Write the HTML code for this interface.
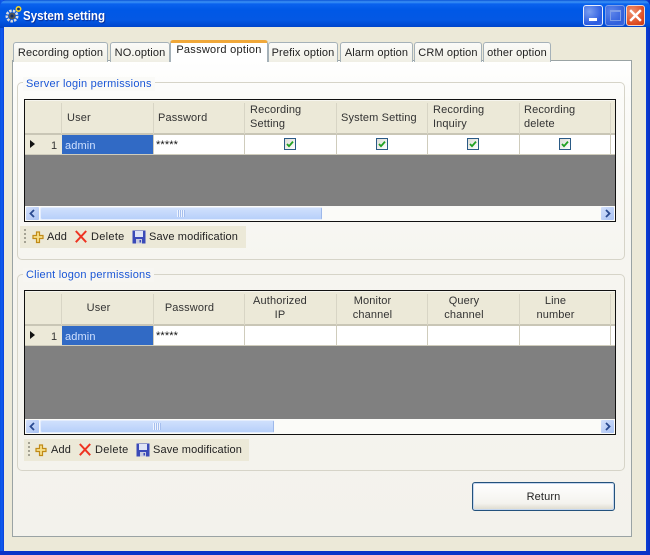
<!DOCTYPE html>
<html>
<head>
<meta charset="utf-8">
<style>
html,body{margin:0;padding:0;width:650px;height:555px;overflow:hidden;background:#0a3cd0}
*{box-sizing:border-box}
body{font-family:"Liberation Sans",sans-serif;font-size:11px;color:#222;position:relative;letter-spacing:.13px}
.a,.a *{position:absolute}
.t{white-space:nowrap;line-height:13px}
#win{left:0;top:0;width:650px;height:555px;background:linear-gradient(90deg,#0a50e0 0,#0f5cf0 2px,#0a3fd8 4px,#0a3fd8 646px,#0a2fc0 650px);overflow:hidden}
#title{left:0;top:0;width:650px;height:28px;border-radius:7px 7px 0 0;background:linear-gradient(180deg,#0a55d8 0,#3c93f5 2px,#0a62ee 4px,#0058e6 10px,#0458e4 20px,#0048d0 26px,#0040c0 28px)}
#client{left:4px;top:27px;width:642px;height:524px;background:#ece9d8}
#bottom{left:0;top:551px;width:650px;height:4px;background:#0a33c8}
.tab{height:20px;background:linear-gradient(180deg,#fbfbf8,#f0efe6);border:1px solid #a5b1b8;border-bottom:0;border-radius:3px 3px 0 0;text-align:center;line-height:20px;font-size:11px;color:#222;white-space:nowrap}
#page{left:12px;top:60px;width:620px;height:477px;background:linear-gradient(180deg,#ffffff 0,#fbfbf8 40px,#f6f5f0 200px,#f3f2ec 477px);border:1px solid #9aa3a4}
.grp{border:1px solid #d6d4c8;border-radius:5px}
.leg{color:#1a56d6;font-size:11px;line-height:13px;white-space:nowrap;padding:0 3px;background:#fafaf7;letter-spacing:.22px}
.grid{left:24px;width:592px;background:#fff;border:1px solid #111}
.hd{background:#ece9d8;font-size:11px;line-height:13.5px;color:#333}
.vsep{width:1px;background:#d8d5c5}
.rsep{width:1px;background:#cfccbc}
.bar{height:22px;background:#ece9d8}
.sb-btn{width:13px;height:13px;background:linear-gradient(135deg,#d3e0fb,#a9c2f3);border-radius:1px}
.thumb{height:13px;background:linear-gradient(180deg,#cfe0fc,#b8d0fa);border:1px solid #e4edfd;border-right-color:#9db8ea;border-radius:2px}
.cb{width:12px;height:12px;border:1px solid #2a5a85;background:linear-gradient(135deg,#dcdcd6,#fff)}
</style>
</head>
<body>
<div id="win" class="a">
  <div id="title">
    <svg style="left:4px;top:5px" width="18" height="18" viewBox="0 0 18 18">
      <circle cx="8" cy="11" r="5.2" fill="none" stroke="#dcdcdc" stroke-width="2.6" stroke-dasharray="2.4 1.2"/>
      <circle cx="8" cy="11" r="3.4" fill="#555"/>
      <circle cx="8" cy="11" r="1.5" fill="#10306a"/>
      <circle cx="14.5" cy="4" r="2.2" fill="#10306a" stroke="#f4d32a" stroke-width="1.6"/>
    </svg>
    <div class="t" style="left:23px;top:8px;font-size:13px;font-weight:bold;color:#fff;text-shadow:1px 1px 1px #0a2a90;line-height:15px;letter-spacing:0;transform:scaleX(.887);transform-origin:0 0">System setting</div>
    <div style="left:583px;top:5px;width:20px;height:21px;border:1px solid #e8eefc;border-radius:3px;background:radial-gradient(circle at 30% 30%,#7b9ff0,#2b5be0 70%,#3a6ae8)"></div>
    <div style="left:589px;top:18px;width:8px;height:3px;background:#fff"></div>
    <div style="left:605px;top:5px;width:20px;height:21px;border:1px solid #7e9ee8;border-radius:3px;background:radial-gradient(circle at 30% 30%,#5f86ea,#2f5fdc 70%,#3a68e0)"></div>
    <div style="left:610px;top:10px;width:11px;height:11px;border:1px solid #7e9ee8;border-top-width:2px"></div>
    <div style="left:626px;top:5px;width:19px;height:21px;border:1px solid #f0d8d0;border-radius:3px;background:radial-gradient(circle at 30% 30%,#ef9270,#dd4a20 70%,#c83a18)"></div>
    <svg style="left:629px;top:9px" width="13" height="13" viewBox="0 0 13 13"><path d="M2 2L11 11M11 2L2 11" stroke="#fff" stroke-width="2.4" stroke-linecap="square"/></svg>
  </div>
  <div id="client"></div>
  <div id="bottom"></div>

  <div id="page"></div>

  <div class="tab" style="left:13px;top:42px;width:95px">Recording option</div>
  <div class="tab" style="left:110px;top:42px;width:60px">NO.option</div>
  <div class="tab" style="left:268px;top:42px;width:70px">Prefix option</div>
  <div class="tab" style="left:340px;top:42px;width:73px">Alarm option</div>
  <div class="tab" style="left:414px;top:42px;width:68px">CRM option</div>
  <div class="tab" style="left:483px;top:42px;width:68px">other option</div>
  <div class="tab" style="left:170px;top:40px;width:98px;height:22px;background:#fff;border:0;border-left:1px solid #a5b1b8;border-right:1px solid #a5b1b8;border-top:3px solid #f0a83a;line-height:15px;letter-spacing:.27px;z-index:3">Password option</div>

  <!-- group 1 -->
  <div class="grp" style="left:17px;top:82px;width:608px;height:178px"></div>
  <div class="leg" style="left:23px;top:77px;padding-top:1px">Server login permissions</div>
  <div class="grid" style="top:99px;height:123px">
    <div class="hd" style="left:0;top:0;width:590px;height:35px;border-bottom:2px solid #c9c6b6;border-top:1px solid #f6f5ee"></div>
    <div class="vsep" style="left:36px;top:3px;height:31px"></div>
    <div class="vsep" style="left:128px;top:3px;height:31px"></div>
    <div class="vsep" style="left:219px;top:3px;height:31px"></div>
    <div class="vsep" style="left:311px;top:3px;height:31px"></div>
    <div class="vsep" style="left:402px;top:3px;height:31px"></div>
    <div class="vsep" style="left:494px;top:3px;height:31px"></div>
    <div class="vsep" style="left:585px;top:3px;height:31px"></div>
    <div class="t" style="left:42px;top:12px;color:#333">User</div>
    <div class="t" style="left:133px;top:12px;color:#333">Password</div>
    <div class="t" style="left:225px;top:4px;color:#333;line-height:13.5px">Recording<br>Setting</div>
    <div class="t" style="left:316px;top:12px;color:#333">System Setting</div>
    <div class="t" style="left:408px;top:4px;color:#333;line-height:13.5px">Recording<br>Inquiry</div>
    <div class="t" style="left:499px;top:4px;color:#333;line-height:13.5px">Recording<br>delete</div>

    <div style="left:0;top:35px;width:37px;height:20px;background:#ece9d8"></div>
    <div style="left:5px;top:40px;width:0;height:0;border-left:5px solid #111;border-top:4.5px solid transparent;border-bottom:4.5px solid transparent"></div>
    <div class="t" style="left:26px;top:40px;color:#333">1</div>
    <div style="left:37px;top:35px;width:91px;height:20px;background:#316ac5"></div>
    <div class="t" style="left:40px;top:40px;color:#cfe0ff">admin</div>
    <div class="t" style="left:131px;top:39px;color:#111">*****</div>
    <div class="rsep" style="left:128px;top:35px;height:20px"></div>
    <div class="rsep" style="left:219px;top:35px;height:20px"></div>
    <div class="rsep" style="left:311px;top:35px;height:20px"></div>
    <div class="rsep" style="left:402px;top:35px;height:20px"></div>
    <div class="rsep" style="left:494px;top:35px;height:20px"></div>
    <div class="rsep" style="left:585px;top:35px;height:20px"></div>
    <div style="left:0;top:54px;width:590px;height:1px;background:#cfccbc"></div>

    <div class="cb" style="left:259px;top:38px"></div><svg style="left:259px;top:38px" width="12" height="12" viewBox="0 0 12 12"><path d="M3 6L5 8.2L9 3.6" fill="none" stroke="#21a121" stroke-width="1.8"/></svg>
    <div class="cb" style="left:351px;top:38px"></div><svg style="left:351px;top:38px" width="12" height="12" viewBox="0 0 12 12"><path d="M3 6L5 8.2L9 3.6" fill="none" stroke="#21a121" stroke-width="1.8"/></svg>
    <div class="cb" style="left:442px;top:38px"></div><svg style="left:442px;top:38px" width="12" height="12" viewBox="0 0 12 12"><path d="M3 6L5 8.2L9 3.6" fill="none" stroke="#21a121" stroke-width="1.8"/></svg>
    <div class="cb" style="left:534px;top:38px"></div><svg style="left:534px;top:38px" width="12" height="12" viewBox="0 0 12 12"><path d="M3 6L5 8.2L9 3.6" fill="none" stroke="#21a121" stroke-width="1.8"/></svg>

    <div style="left:0;top:55px;width:590px;height:51px;background:#808080"></div>
    <div style="left:0;top:106px;width:590px;height:15px;background:#fbfbf8"></div>
    <div class="sb-btn" style="left:1px;top:107px"></div>
    <svg style="left:1px;top:107px" width="13" height="13" viewBox="0 0 13 13"><path d="M8 3L4.5 6.5L8 10" fill="none" stroke="#2a4a90" stroke-width="1.8"/></svg>
    <div class="thumb" style="left:15px;top:107px;width:282px"></div>
    <div style="left:152px;top:110px;width:8px;height:7px;background:repeating-linear-gradient(90deg,#eef4ff 0,#eef4ff 1px,#a6bfee 1px,#a6bfee 2px)"></div>
    <div class="sb-btn" style="left:576px;top:107px"></div>
    <svg style="left:576px;top:107px" width="13" height="13" viewBox="0 0 13 13"><path d="M5 3L8.5 6.5L5 10" fill="none" stroke="#2a4a90" stroke-width="1.8"/></svg>
  </div>
  <div class="bar" style="left:20px;top:226px;width:226px"></div>
  <div style="left:24px;top:229px;width:2px;height:16px;background:repeating-linear-gradient(180deg,#a5a394 0,#a5a394 2px,transparent 2px,transparent 4px)"></div>
  <svg style="left:32px;top:231px" width="12" height="13" viewBox="0 0 12 13"><path d="M4.5 1H7.5V4.5H11V7.5H7.5V11.5H4.5V7.5H1V4.5H4.5Z" fill="#f8e08a" stroke="#c08a18" stroke-width="1.2"/></svg>
  <div class="t" style="left:47px;top:231px">Add</div>
  <svg style="left:75px;top:230px" width="12" height="13" viewBox="0 0 12 13"><path d="M.8 1L11.2 12.2M11.2 1L.8 12.2" stroke="#ee3322" stroke-width="2"/></svg>
  <div class="t" style="left:91px;top:231px;letter-spacing:.3px">Delete</div>
  <svg style="left:132px;top:230px" width="14" height="14" viewBox="0 0 14 14"><rect x="0.5" y="0.5" width="13" height="13" fill="#3a4ab8"/><rect x="3" y="1" width="8" height="6" fill="#dfe4f6"/><rect x="4" y="9" width="6" height="4.5" fill="#c8cbe0"/><rect x="7.5" y="10" width="1.5" height="2.5" fill="#3a4ab8"/></svg>
  <div class="t" style="left:149px;top:231px">Save modification</div>

  <!-- group 2 -->
  <div class="grp" style="left:17px;top:274px;width:608px;height:197px"></div>
  <div class="leg" style="left:23px;top:268px;padding-top:1px;background:#f7f6f2">Client logon permissions</div>
  <div class="grid" style="top:290px;height:145px">
    <div class="hd" style="left:0;top:0;width:590px;height:35px;border-bottom:2px solid #c9c6b6;border-top:1px solid #f6f5ee"></div>
    <div class="vsep" style="left:36px;top:3px;height:31px"></div>
    <div class="vsep" style="left:128px;top:3px;height:31px"></div>
    <div class="vsep" style="left:219px;top:3px;height:31px"></div>
    <div class="vsep" style="left:311px;top:3px;height:31px"></div>
    <div class="vsep" style="left:402px;top:3px;height:31px"></div>
    <div class="vsep" style="left:494px;top:3px;height:31px"></div>
    <div class="vsep" style="left:585px;top:3px;height:31px"></div>
    <div class="t" style="left:28px;width:91px;text-align:center;top:11px;color:#333">User</div>
    <div class="t" style="left:119px;width:91px;text-align:center;top:11px;color:#333">Password</div>
    <div class="t" style="left:209px;width:92px;text-align:center;top:4px;color:#333;line-height:13.5px">Authorized<br>IP</div>
    <div class="t" style="left:302px;width:91px;text-align:center;top:4px;color:#333;line-height:13.5px">Monitor<br>channel</div>
    <div class="t" style="left:393px;width:92px;text-align:center;top:4px;color:#333;line-height:13.5px">Query<br>channel</div>
    <div class="t" style="left:485px;width:91px;text-align:center;top:4px;color:#333;line-height:13.5px">Line<br>number</div>

    <div style="left:0;top:35px;width:37px;height:20px;background:#ece9d8"></div>
    <div style="left:5px;top:40px;width:0;height:0;border-left:5px solid #111;border-top:4.5px solid transparent;border-bottom:4.5px solid transparent"></div>
    <div class="t" style="left:26px;top:40px;color:#333">1</div>
    <div style="left:37px;top:35px;width:91px;height:20px;background:#316ac5"></div>
    <div class="t" style="left:40px;top:40px;color:#cfe0ff">admin</div>
    <div class="t" style="left:131px;top:39px;color:#111">*****</div>
    <div class="rsep" style="left:128px;top:35px;height:20px"></div>
    <div class="rsep" style="left:219px;top:35px;height:20px"></div>
    <div class="rsep" style="left:311px;top:35px;height:20px"></div>
    <div class="rsep" style="left:402px;top:35px;height:20px"></div>
    <div class="rsep" style="left:494px;top:35px;height:20px"></div>
    <div class="rsep" style="left:585px;top:35px;height:20px"></div>
    <div style="left:0;top:54px;width:590px;height:1px;background:#cfccbc"></div>

    <div style="left:0;top:55px;width:590px;height:73px;background:#808080"></div>
    <div style="left:0;top:128px;width:590px;height:15px;background:#fbfbf8"></div>
    <div class="sb-btn" style="left:1px;top:129px"></div>
    <svg style="left:1px;top:129px" width="13" height="13" viewBox="0 0 13 13"><path d="M8 3L4.5 6.5L8 10" fill="none" stroke="#2a4a90" stroke-width="1.8"/></svg>
    <div class="thumb" style="left:15px;top:129px;width:234px"></div>
    <div style="left:128px;top:132px;width:8px;height:7px;background:repeating-linear-gradient(90deg,#eef4ff 0,#eef4ff 1px,#a6bfee 1px,#a6bfee 2px)"></div>
    <div class="sb-btn" style="left:576px;top:129px"></div>
    <svg style="left:576px;top:129px" width="13" height="13" viewBox="0 0 13 13"><path d="M5 3L8.5 6.5L5 10" fill="none" stroke="#2a4a90" stroke-width="1.8"/></svg>
  </div>
  <div class="bar" style="left:24px;top:439px;width:225px"></div>
  <div style="left:28px;top:442px;width:2px;height:16px;background:repeating-linear-gradient(180deg,#a5a394 0,#a5a394 2px,transparent 2px,transparent 4px)"></div>
  <svg style="left:35px;top:444px" width="12" height="13" viewBox="0 0 12 13"><path d="M4.5 1H7.5V4.5H11V7.5H7.5V11.5H4.5V7.5H1V4.5H4.5Z" fill="#f8e08a" stroke="#c08a18" stroke-width="1.2"/></svg>
  <div class="t" style="left:51px;top:444px">Add</div>
  <svg style="left:79px;top:443px" width="12" height="13" viewBox="0 0 12 13"><path d="M.8 1L11.2 12.2M11.2 1L.8 12.2" stroke="#ee3322" stroke-width="2"/></svg>
  <div class="t" style="left:95px;top:444px;letter-spacing:.3px">Delete</div>
  <svg style="left:136px;top:443px" width="14" height="14" viewBox="0 0 14 14"><rect x="0.5" y="0.5" width="13" height="13" fill="#3a4ab8"/><rect x="3" y="1" width="8" height="6" fill="#dfe4f6"/><rect x="4" y="9" width="6" height="4.5" fill="#c8cbe0"/><rect x="7.5" y="10" width="1.5" height="2.5" fill="#3a4ab8"/></svg>
  <div class="t" style="left:153px;top:444px">Save modification</div>

  <!-- return -->
  <div style="left:472px;top:482px;width:143px;height:29px;border:1px solid #23527c;border-radius:3px;background:linear-gradient(180deg,#ffffff,#f4f3ee 75%,#dcd9cc);box-shadow:inset 0 0 0 1px #c5d6ee;text-align:center;line-height:29px;font-size:11px;color:#222">Return</div>
</div>
</body>
</html>
